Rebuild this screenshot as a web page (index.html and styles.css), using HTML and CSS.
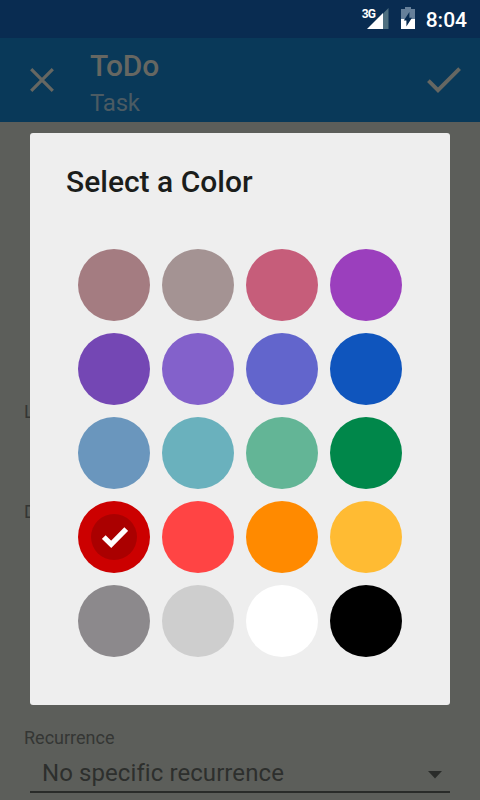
FILE: index.html
```html
<!DOCTYPE html>
<html lang="en">
<head>
    <meta charset="UTF-8">
    <title>ToDo</title>
    <link rel="stylesheet" href="styles.css">
</head>
<body>
<div class="status-bar">
    <span class="network">3G</span>
    <svg class="signal" width="22" height="22" viewBox="0 0 22 22">
        <path d="M16 5.5 21.5 0V21H16z" fill="#4f7080"/>
        <path d="M0 21 16 5V21z" fill="#fff"/>
    </svg>
    <svg class="battery" width="14" height="22" viewBox="0 0 14 22">
        <path d="M0 2h4V0h6v2h4v10H0z" fill="#66809a"/>
        <path d="M0 12h14v10H0z" fill="#fff"/>
        <path d="M5.4 19.5V13.4H2.8L8.4 5V10.8H11z" fill="#092c51"/>
    </svg>
    <span class="clock">8:04</span>
</div>
<div class="toolbar">
    <svg class="close" width="24" height="24" viewBox="0 0 24 24">
        <path d="M1.2 1.2 22.8 22.8M22.8 1.2 1.2 22.8" fill="none" stroke="#666762" stroke-width="3.2"/>
    </svg>
    <div class="titles">
        <div class="title">ToDo</div>
        <div class="subtitle">Task</div>
    </div>
    <svg class="done" width="34" height="26" viewBox="0 0 34 26">
        <path d="M1.4 13.6 11 23.2 32.6 1.6" fill="none" stroke="#666762" stroke-width="3.8"/>
    </svg>
</div>
<div class="form">
    <div class="field field-location">
        <div class="label">L</div>
    </div>
    <div class="field field-description">
        <div class="label">D</div>
    </div>
    <div class="field">
        <div class="label">Recurrence</div>
        <div class="spinner">
            <span>No specific recurrence</span>
            <svg class="arrow" width="14" height="8" viewBox="0 0 14 8">
                <path d="M0 0h14L7 7.5z" fill="#2a2c2a"/>
            </svg>
        </div>
    </div>
</div>
<div class="dialog">
    <div class="dialog-title">Select a Color</div>
    <div class="palette">
        <div class="swatch rosewood"></div>
        <div class="swatch taupe"></div>
        <div class="swatch rose"></div>
        <div class="swatch magenta"></div>
        <div class="swatch violet"></div>
        <div class="swatch lavender"></div>
        <div class="swatch indigo"></div>
        <div class="swatch blue"></div>
        <div class="swatch steel"></div>
        <div class="swatch teal"></div>
        <div class="swatch mint"></div>
        <div class="swatch green"></div>
        <div class="swatch red">
            <div class="selected">
                <svg width="26" height="21" viewBox="0 0 26 21">
                    <path d="M1.8 10 9.2 17.3 24.2 2" fill="none" stroke="#fff" stroke-width="5.2"/>
                </svg>
            </div>
        </div>
        <div class="swatch coral"></div>
        <div class="swatch orange"></div>
        <div class="swatch amber"></div>
        <div class="swatch gray"></div>
        <div class="swatch silver"></div>
        <div class="swatch white"></div>
        <div class="swatch black"></div>
    </div>
</div>
</body>
</html>
```
FILE: styles.css
```css
* {
    box-sizing: border-box;
}

body {
    margin: 0;
    height: 800px;
    position: relative;
    overflow: hidden;
    background: #5c5e5a;
    font-family: Roboto, sans-serif;
}

svg {
    display: block;
    flex: none;
}

.status-bar {
    display: flex;
    justify-content: flex-end;
    height: 38px;
    padding-right: 13px;
    background: #092c51;
    color: #fff;
}

.network {
    width: 13px;
    margin-top: 7px;
    margin-right: -8px;
    font-size: 12px;
    line-height: 14px;
    font-weight: 700;
    letter-spacing: -0.8px;
}

.signal {
    margin-top: 8px;
}

.battery {
    margin: 7px 11px 0 12px;
}

.clock {
    font-size: 21px;
    line-height: 40px;
    font-weight: 500;
}

.toolbar {
    display: flex;
    height: 84px;
    padding: 0 19px 0 30px;
    background: #093959;
    color: #666762;
}

.close {
    margin-top: 30px;
}

.titles {
    flex: 1;
    padding: 10px 0 0 36px;
}

.title {
    font-size: 30px;
    line-height: 36px;
    font-weight: 500;
    letter-spacing: -0.2px;
}

.subtitle {
    margin-top: 4px;
    font-size: 24px;
    line-height: 30px;
    letter-spacing: -0.2px;
    color: #4b5b63;
}

.done {
    margin-top: 29px;
}

.form {
    padding: 279px 24px 0;
}

.label {
    font-size: 18px;
    line-height: 22px;
    color: #343634;
}

.field-location {
    height: 100px;
}

.field-description {
    height: 226px;
}

.spinner {
    display: flex;
    align-items: center;
    justify-content: space-between;
    width: 420px;
    height: 44px;
    margin: 0 6px;
    padding: 6px 8px 0 12px;
    border-bottom: 2px solid #292b29;
    font-size: 24px;
    letter-spacing: 0.08px;
    color: #2d2f2d;
}

.arrow {
    margin-top: 3px;
}

/* modal over the dimmed form */
.dialog {
    position: absolute;
    top: 133px;
    left: 30px;
    width: 420px;
    height: 572px;
    padding: 31px 36px;
    border-radius: 3px;
    background: #eee;
}

.dialog-title {
    font-size: 30px;
    line-height: 36px;
    font-weight: 500;
    color: #1b1d1b;
}

.palette {
    display: grid;
    grid-template-columns: repeat(4, 72px);
    gap: 12px;
    padding: 49px 12px 0;
}

.swatch {
    display: flex;
    align-items: center;
    justify-content: center;
    height: 72px;
    border-radius: 50%;
}

.selected {
    display: flex;
    align-items: center;
    justify-content: center;
    width: 46px;
    height: 46px;
    padding-left: 2px;
    border-radius: 50%;
    background: #aa0000;
}

.rosewood { background: #a47c81; }
.taupe { background: #a49393; }
.rose { background: #c65d7a; }
.magenta { background: #9b3fbd; }
.violet { background: #7447b4; }
.lavender { background: #8361cb; }
.indigo { background: #6265cc; }
.blue { background: #0f55bd; }
.steel { background: #6a96bd; }
.teal { background: #6ab1bd; }
.mint { background: #63b596; }
.green { background: #00874a; }
.red { background: #cc0000; }
.coral { background: #ff4444; }
.orange { background: #ff8a00; }
.amber { background: #ffbb33; }
.gray { background: #8c898c; }
.silver { background: #cecece; }
.white { background: #fff; }
.black { background: #000; }
```
